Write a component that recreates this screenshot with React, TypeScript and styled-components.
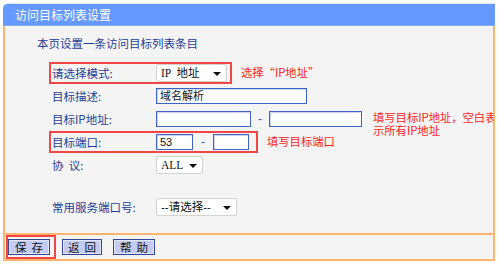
import React from "react";
import styled, { createGlobalStyle } from "styled-components";

const Global = createGlobalStyle`
  html, body { margin: 0; padding: 0; background: #ffffff; }
  body { font-family: "Noto Sans CJK SC", "Liberation Sans", sans-serif; }
  * { box-sizing: border-box; }
`;

const Page = styled.div`
  padding: 3px 0 0 3px;
  width: 495px;
`;

const Header = styled.div`
  height: 23px;
  border-top: 1px solid #dce7ff;
  border-top-left-radius: 5px;
  border-top-right-radius: 1px;
  background: #6699ff;
  border-bottom: 1px solid #86adff;
  color: #ffffff;
  font-size: 12px;
  line-height: 21px;
  padding-left: 12px;
  white-space: nowrap;
`;

const Panel = styled.div`
  background: #f4f4f4;
  border-left: 2px solid #ffb36b;
  border-right: 2px solid #ffb36b;
  border-bottom: 2px solid #ffb36b;
  overflow: hidden;
`;

const FormArea = styled.div`
  height: 209px;
  border-bottom: 2px solid #ffb36b;
  padding-top: 8px;
`;

const Intro = styled.div`
  padding-left: 32px;
  height: 18px;
  line-height: 18px;
  font-size: 11.5px;
  color: #1e3f96;
  margin-bottom: 9px;
  white-space: nowrap;
`;

const Row = styled.div<{ $gap?: number }>`
  display: flex;
  align-items: center;
  height: 23px;
  margin-left: 44px;
  margin-top: ${(p) => p.$gap ?? 0}px;
`;

const Box = styled.div<{ $mark?: boolean; $pad?: number }>`
  display: flex;
  align-items: center;
  height: 22px;
  border: 2px solid ${(p) => (p.$mark ? "#f04646" : "transparent")};
  padding-left: 1px;
  padding-right: ${(p) => p.$pad ?? 0}px;
`;

const Label = styled.span`
  width: 104px;
  flex: none;
  font-size: 11.5px;
  color: #1e3f96;
  white-space: pre;
  line-height: 14px;
`;

const Input = styled.div<{ $w: number }>`
  width: ${(p) => p.$w}px;
  height: 16px;
  flex: none;
  background: #ffffff;
  border: 1px solid #4064c6;
  box-shadow: inset 1px 1px 0 #c9d4f0;
  font-family: "Liberation Sans", "Noto Sans CJK SC", sans-serif;
  font-size: 11px;
  line-height: 14px;
  padding-left: 3px;
  color: #111;
  white-space: nowrap;
  overflow: hidden;
`;

const Dash = styled.span<{ $m: number }>`
  margin: 0 ${(p) => p.$m}px;
  color: #3f5fbf;
  font-family: "Liberation Sans", sans-serif;
  font-size: 12px;
  line-height: 14px;
`;

const Select = styled.div<{ $w: number; $serif?: boolean }>`
  position: relative;
  width: ${(p) => p.$w}px;
  height: 18px;
  flex: none;
  background: #ffffff;
  border: 1px solid #d2d2d2;
  border-radius: 2px;
  padding-left: 4px;
  font-family: ${(p) =>
    p.$serif
      ? `"Liberation Serif", "Noto Sans CJK SC", serif`
      : `"Liberation Sans", "Noto Sans CJK SC", sans-serif`};
  font-size: 11.5px;
  line-height: 16px;
  color: #111;
  white-space: pre;
`;

const Arrow = styled.span`
  position: absolute;
  right: 5px;
  top: 7px;
  width: 0;
  height: 0;
  border-left: 4px solid transparent;
  border-right: 4px solid transparent;
  border-top: 4px solid #111;
`;

const Note = styled.div<{ $m: number; $top?: boolean }>`
  margin-left: ${(p) => p.$m}px;
  color: #ff1e1e;
  font-size: 11.3px;
  line-height: 13px;
  white-space: nowrap;
  align-self: ${(p) => (p.$top ? "flex-start" : "center")};
  margin-top: ${(p) => (p.$top ? 4 : 0)}px;
`;

const ButtonBar = styled.div`
  display: flex;
  align-items: center;
  height: 24px;
`;

const SaveMark = styled.div`
  display: flex;
  align-items: center;
  height: 24px;
  margin-left: 1px;
  padding-right: 4px;
  border: 2px solid #f04646;
`;

const Button = styled.button<{ $w: number; $m?: number }>`
  width: ${(p) => p.$w}px;
  height: 16px;
  margin: 0 0 0 ${(p) => p.$m ?? 0}px;
  padding: 0;
  background: #c3ccf0;
  border: 1px solid #32469e;
  box-shadow: inset 0 0 0 1px #e2e7fb;
  font-family: "Noto Sans CJK SC", sans-serif;
  font-size: 11.5px;
  line-height: 13px;
  color: #111;
  white-space: pre;
`;

export default function App() {
  return (
    <>
      <Global />
      <Page>
        <Header>访问目标列表设置</Header>
        <Panel>
          <FormArea>
            <Intro>本页设置一条访问目标列表条目</Intro>
            <Row>
              <Box $mark $pad={3}>
                <Label>请选择模式:</Label>
                <Select $w={71} $serif>
                  {"IP  地址"}
                  <Arrow />
                </Select>
              </Box>
              <Note $m={9}>选择“IP地址”</Note>
            </Row>
            <Row>
              <Box>
                <Label>目标描述:</Label>
                <Input $w={151}>域名解析</Input>
              </Box>
            </Row>
            <Row>
              <Box>
                <Label>目标IP地址:</Label>
                <Input $w={95} />
                <Dash $m={7}>-</Dash>
                <Input $w={93} />
              </Box>
              <Note $m={9} $top>
                填写目标IP地址，空白表
                <br />
                示所有IP地址
              </Note>
            </Row>
            <Row>
              <Box $mark $pad={7}>
                <Label>目标端口:</Label>
                <Input $w={37}>53</Input>
                <Dash $m={8}>-</Dash>
                <Input $w={36} />
              </Box>
              <Note $m={9}>填写目标端口</Note>
            </Row>
            <Row>
              <Box>
                <Label>{"协  议:"}</Label>
                <Select $w={47} $serif>
                  ALL
                  <Arrow />
                </Select>
              </Box>
            </Row>
            <Row $gap={19}>
              <Box>
                <Label>常用服务端口号:</Label>
                <Select $w={81}>
                  --请选择--
                  <Arrow />
                </Select>
              </Box>
            </Row>
          </FormArea>
          <ButtonBar>
            <SaveMark>
              <Button $w={42}>{"保  存"}</Button>
            </SaveMark>
            <Button $w={40} $m={6}>{"返  回"}</Button>
            <Button $w={42} $m={11}>{"帮  助"}</Button>
          </ButtonBar>
        </Panel>
      </Page>
    </>
  );
}
